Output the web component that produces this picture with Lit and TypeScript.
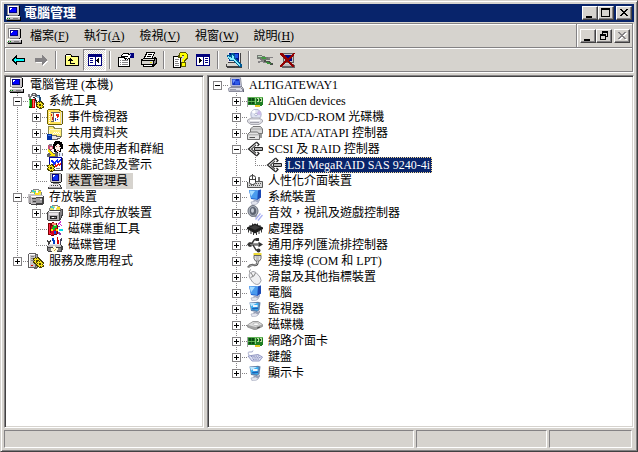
import { LitElement, html, svg, css, nothing, TemplateResult } from "lit";
import { customElement, property } from "lit/decorators.js";
import { classMap } from "lit/directives/class-map.js";

type Node = {
  label: string;
  icon: string;
  open?: boolean;
  expandable?: boolean;
  selected?: "active" | "inactive";
  children?: Node[];
};

const gear = (x: number, y: number) => svg`
  <path d="M${x + 2} ${y}h1v1h1v-1h2v1h1v1h1v2h-1v1h1v2h-2v1h-3v-1h-2v-1h-1v-2h1v-1h-1v-2h2z" fill="#4a4200"/>
  <path d="M${x + 2} ${y + 1}h1v1h1v-1h1v1h1v1h1v1h-1v1h1v1h-1v1h-1v-1h-1v1h-1v-1h-1v-1h-1v-1h1v-1h-1v-1h1z" fill="#f7e31c"/>
  <path d="M${x + 3} ${y + 3}h2v2h-2z" fill="#4a4200"/>`;

const nicCard = svg`
  <path d="M0 4h1v10h-1z" fill="#a5a2a5"/>
  <path d="M1 4h15v8h-15z" fill="#1f7f24"/>
  <path d="M1 4h15v1h-15zM1 8h8v1h-8z" fill="#63b357"/>
  <path d="M2 5h2v3h-2zM5 5h2v3h-2zM2 9h2v2h-2zM5 9h2v2h-2z" fill="#0d4a14"/>
  <path d="M8 5h1v6h-1z" fill="#8fd07a"/>
  <path d="M10 5h2v4h-2zM13 5h2v4h-2z" fill="#b9dfa0"/>
  <path d="M10 6h1v2h-1zM13 6h1v2h-1z" fill="#0d4a14"/>
  <path d="M8 12h5v2h-5z" fill="#e3cb2a"/>
  <path d="M13 12h2v1h-2z" fill="#1f7f24"/>`;

const lcd = svg`
  <path d="M2 1L11 1.500L13.500 .5V8.500L10.500 11L4 10z" fill="#2161cf"/>
  <path d="M2 1L11 1.500L10.500 10L4 9z" fill="#4a9bee"/>
  <path d="M2.500 1.500L8 2L4 7.500z" fill="#a5dbff"/>
  <path d="M11 1.500L14 .5V8.500L10.500 11z" fill="#1b49b4"/>
  <path d="M6.500 10.500L10.500 11L13 9.500V11.500L10.500 14.500L6.500 14z" fill="#a9b0c6"/>
  <path d="M4 13L8.500 12L11.500 13.500L8.500 15.800H5z" fill="#e3e5ee" stroke="#8d93aa" stroke-width=".5"/>`;

const lcdImage = svg`
  <path d="M2.500 1.500L11 .8L13.500 1.500L12.500 9L10 11L4 10z" fill="#5f7fa8"/>
  <path d="M3 2L11.500 2L11 9.500L4.500 9z" fill="#39aef0"/>
  <path d="M3 2L10 2L4 5.500z" fill="#bfe8ff"/>
  <path d="M6 4H10.500V6H6z" fill="#f0f4fb"/>
  <path d="M5 7L11 6.500V8L5.500 8.500z" fill="#1e5fb5"/>
  <path d="M6.500 10.500L10.500 11L13 9.500V11.500L10.500 14.500L6.500 14z" fill="#9aa2b8"/>
  <path d="M4 13L8.500 12L11.500 13.500L8.500 15.800H5z" fill="#e3e5ee" stroke="#8d93aa" stroke-width=".5"/>`;

const scsi = svg`
  <path d="M9.500 1.200L1.500 8L9.500 14.800" fill="none" stroke="#222" stroke-width="1.200"/>
  <path d="M9 3.800L4.500 8L9 12.200" fill="none" stroke="#444" stroke-width="1.200"/>
  <path d="M9.500 1L12 3.500L10.500 5M9.500 15L12 12.500L10.500 11" fill="none" stroke="#222" stroke-width="1.200"/>
  <path d="M3 8L9.500 2.500" stroke="#c8c8c8"/>
  <path d="M7.500 6.500H15.500V9.500H7.500z" fill="#b7b7b7" stroke="#222"/>`;

const pc = svg`
  <path d="M13 1h1v9h-1zM3 10h10v1h-10z" fill="#000"/>
  <path d="M1 0h12v10h-12z" fill="#c6c3c6"/>
  <path d="M1 0h12v1h-11v9h-1z" fill="#848284"/>
  <path d="M2 1h10v1h-9v7h-1z" fill="#fff"/>
  <path d="M3 2h8v6h-8z" fill="#000084"/>
  <path d="M4 3h6v4h-6z" fill="#0000ff"/>
  <path d="M4 3h2v1h-1v1h-1z" fill="#fff"/>
  <path d="M3 10h9v1h-9z" fill="#848284"/>
  <path d="M0 11h14v4h-14z" fill="#c6c3c6"/>
  <path d="M0 11h14v1h-13v3h-1z" fill="#fff"/>
  <path d="M1 15h14v1h-14zM14 12h1v3h-1z" fill="#000"/>
  <path d="M1 13h1v1h-1zM3 13h1v1h-1z" fill="#008200"/>
  <path d="M7 13h5v1h-5zM0 14h14v1h-14z" fill="#848284"/>`;

const disc = svg`
  <path d="M3 1h2v-1h6v1h2v2h1v4h-12v-4h1z" fill="#848284"/>
  <path d="M4 1h7v1h2v5h-10v-4h1z" fill="#dee36b"/>
  <path d="M4 1h2v1h1v2h-1v-1h-2z" fill="#42cfd6"/>
  <path d="M8 1h2v2h-2z" fill="#fff"/>
  <path d="M10 2h3v2h-3z" fill="#ffdf21"/>
  <path d="M7 3h2v2h-2z" fill="#fff"/>`;

const pixelIcons: Record<string, TemplateResult> = {
  pc,
  device: svg`
    <path d="M14 1h1v8h-1zM4 9h10v1h-10z" fill="#212021"/>
    <path d="M3 0h11v9h-11z" fill="#c6c3c6"/>
    <path d="M3 0h11v1h-10v8h-1z" fill="#848284"/>
    <path d="M5 1h7v7h-7z" fill="#000084"/>
    <path d="M6 2h5v5h-5z" fill="#1030f0"/>
    <path d="M6 2h2v1h-1v1h-1z" fill="#fff"/>
    <path d="M6 10h6v1h-6z" fill="#848284"/>
    <path d="M3 11h10v1h1v2h1v2h-14v-2h1v-2h1z" fill="#424142"/>
    <path d="M3 11h9v1h1v2h-11v-2h1z" fill="#e7e3e7"/>
    <path d="M4 12h1v1h-1zM6 12h1v1h-1zM8 12h1v1h-1zM10 12h1v1h-1z" fill="#424142"/>
    <path d="M2 14h12v1h-12z" fill="#a5a2a5"/>`,
  tools: svg`
    <path d="M1 1h1v2h1v-2h1v3h-1v2h-2v-2h-1v-3z" fill="#848284"/>
    <path d="M4 0h4v1h1v3h-2v-1h-3z" fill="#636163"/>
    <path d="M5 1h2v1h-2z" fill="#e7e3e7"/>
    <path d="M5 4h2v1h1v2h1v3h1v4h-2v-4h-1v-3h-1v-2h-1z" fill="#212021"/>
    <path d="M6 5h1v3h1v2h-1z" fill="#a5a2a5"/>
    <path d="M1 6h3v8h-3z" fill="#008200"/>
    <path d="M1 7h1v6h-1z" fill="#7bdf7b"/>
    <path d="M4 6h3v9h-3z" fill="#ce0000"/>
    <path d="M5 7h1v7h-1z" fill="#ff7b7b"/>
    <path d="M1 14h3v1h-3z" fill="#004100"/>
    <path d="M9 2h3v2h1v4h-1v1h-1v-4h-2z" fill="#214973"/>
    <path d="M9 3h2v2h-2z" fill="#9cc7e7"/>${gear(8, 8)}`,
  event: svg`
    <path d="M1 0h11l2 2h2v13h-1v1h-14v-1h-1v-14h1z" fill="#6b5d00"/>
    <path d="M1 1h11v1h2v13h-13z" fill="#ffe35a"/>
    <path d="M2 3h1v1h-1zM2 5h1v1h-1zM2 7h1v1h-1zM2 9h1v1h-1zM2 11h1v1h-1zM2 13h1v1h-1z" fill="#fff"/>
    <path d="M4 3h9v10h-9z" fill="#636163"/>
    <path d="M4 4h2v8h-2z" fill="#ffdf9c"/>
    <path d="M7 4h6v9h-6z" fill="#fff"/>
    <path d="M4 5h1v2h-1zM5 8h1v3h-1z" fill="#d62010"/>
    <path d="M9 5h3v3h-1v1h-1v-2h-1z" fill="#e72010"/>
    <path d="M8 9h1v3h-1zM10 10h1v1h-1z" fill="#2141c6"/>
    <path d="M14 3h1v12h-1z" fill="#dedbde"/>`,
  share: svg`
    <path d="M1 1h6v1h1v1h7v9h-14z" fill="#8c8a52"/>
    <path d="M2 2h4v1h1v1h7v7h-12z" fill="#ffef7b"/>
    <path d="M2 5h1v-1h11v1h-11v6h-1z" fill="#fffbce"/>
    <path d="M7 7h1v1h-1zM9 7h1v1h-1zM11 7h1v1h-1zM6 8h1v1h-1zM8 8h1v1h-1zM10 8h1v1h-1zM12 8h1v1h-1z" fill="#fff"/>
    <path d="M0 9h5v6h-5z" fill="#0030a5"/>
    <path d="M1 10h3v1h-3z" fill="#4a82e7"/>
    <path d="M5 10h5v1h4v2h-1v1h-2v1h-6z" fill="#636163"/>
    <path d="M5 11h4v1h4v1h-3v1h-5z" fill="#e7e3e7"/>`,
  users: svg`
    <path d="M8 0h5v1h2v2h1v5h-2v3h-1v1h-4v-1h-2v-3h-1v-5h1v-2h1z" fill="#000"/>
    <path d="M9 4h1v-1h2v1h1v2h1v1h-1v3h-1v1h-2v-1h-1v-2h-1v-3h1z" fill="#fff3e7"/>
    <path d="M9 5h1v1h-1zM12 5h1v1h-1zM10 9h2v1h-2z" fill="#a55142"/>
    <path d="M1 4h3v1h2v3h-1v1h-3v-1h-1z" fill="#c64a73"/>
    <path d="M2 3h3v2h-3z" fill="#848284"/>
    <path d="M3 6h2v2h-2z" fill="#ffdbc6"/>
    <path d="M1 8h2v1h1v1h1v1h1v1h2v-1h2v1h1v4h-11v-3h1v-1h2v-1h-2z" fill="#636163"/>
    <path d="M1 8h1v1h1v1h1v1h1v1h1v1h2v2h-5v-1h1v-1h-1v-1h-1v-1h-1z" fill="#ffe700"/>
    <path d="M11 11h3v1h2v3h-2v1h-3z" fill="#e7efff"/>
    <path d="M12 12h1v3h-1zM15 12h1v3h-1z" fill="#848284"/>`,
  perf: svg`
    <path d="M2 0h13v14h-13z" fill="#00009c"/>
    <path d="M3 1h11v12h-11z" fill="#fff"/>
    <path d="M4 3h2v1h1v1h1v-1h1v-1h1v-1h1v2h1v-1h1v-1h1v2h-1v1h-1v1h-2v-1h-1v2h-1v1h-2v-2h-1v-1h-1z" fill="#1030ff"/>
    <path d="M8 7h1v1h1v-1h1v-1h1v1h1v-1h1v2h-1v1h-1v-1h-1v1h-1v1h-2z" fill="#e72010"/>
    <path d="M9 11h4v1h-4z" fill="#848284"/>
    <path d="M15 1h1v13h-12v-1h11z" fill="#424142"/>${gear(0, 7)}`,
  storage: svg`${disc}
    <path d="M0 4h8v2h7v1h1v8h-1v1h-12v-1h-2v-1h-1z" fill="#424142"/>
    <path d="M0 4h7v2h8v1h-7v8h-5v-1h-3z" fill="#c6c3c6"/>
    <path d="M0 4h7v1h-7zM3 7h12v1h-12z" fill="#fff"/>
    <path d="M1 7h2v7h-2z" fill="#a5a2a5"/>
    <path d="M4 9h10v5h-10z" fill="#9c9a9c"/>
    <path d="M4 9h4v1h-4zM5 12h3v1h-3z" fill="#424142"/>
    <path d="M12 10h2v1h-2z" fill="#e7e3e7"/>
    <path d="M6 2h5v3h-5z" fill="#42cfa5"/>
    <path d="M7 3h4v3h-4z" fill="#ffdf21"/>
    <path d="M8 2h2v2h-2z" fill="#fff"/>`,
  removable: svg`${disc}
    <path d="M1 6h2v-1h11v-1h2v7h-1v2h-1v2h-1v1h-12v-1h-1v-8h1z" fill="#424142"/>
    <path d="M2 6h11v1h-11z" fill="#fff"/>
    <path d="M1 7h11v8h-11z" fill="#b5b2b5"/>
    <path d="M13 6h1v-1h1v5h-1v3h-1z" fill="#848284"/>
    <path d="M2 8h9v2h-9z" fill="#e7e3e7"/>
    <path d="M3 11h7v3h-7z" fill="#212021"/>
    <path d="M4 12h5v1h-5z" fill="#848284"/>
    <path d="M5 12h2v1h-2z" fill="#fff"/>`,
  defrag: svg`
    <path d="M1 2h4v-1h2v1h3v2h1v9h-1v1h-3v1h-3v-1h-3z" fill="#7b0000"/>
    <path d="M2 3h1v9h3v2h-2v-1h-2z" fill="#ff2442"/>
    <path d="M4 5h6v8h-3v1h-2v-1h-1z" fill="#d60021"/>
    <path d="M5 2h4v2h-4z" fill="#ff8273"/>
    <path d="M6 4h4v3h-2v2h-3v-3h1z" fill="#10b621"/>
    <path d="M7 4h2v1h-2z" fill="#adf7ad"/>
    <path d="M4 8h2v2h-2zM9 8h2v2h-2z" fill="#ffe300"/>
    <path d="M7 10h2v3h-2z" fill="#1041d6"/>
    <path d="M11 2h1v-1h1v-1h1v2h-1v1h-1v1h-1z" fill="#c630ce"/>
    <path d="M13 3h1v1h1v1h-1v-1h-1z" fill="#c630ce"/>
    <path d="M12 8h4v2h-4z" fill="#00dfe7"/>
    <path d="M11 5h2v1h-2zM11 11h2v2h-2zM12 12h2v2h-2z" fill="#8c3aad"/>`,
  diskmgmt: svg`
    <path d="M0 3h1v1h2v-1h1v2h-1v2h-2v-2h-1z" fill="#424142"/>
    <path d="M5 1h2v2h1v4h-2v-3h-1z" fill="#0041c6"/>
    <path d="M10 0h1v3h1v4h-2z" fill="#d60000"/>
    <path d="M13 2h1v-1h1v3h-1v3h-1z" fill="#42415a"/>
    <path d="M1 7h13v1h1v1h1v4h-1v2h-14v-1h-1v-5h1z" fill="#424142"/>
    <path d="M2 7h11v1h1v2h-13v-2h1z" fill="#c6c3c6"/>
    <path d="M2 7h11v1h-11z" fill="#e7e3e7"/>
    <path d="M1 11h13v3h-13z" fill="#848284"/>
    <path d="M6 9h2v1h1v1h2v2h-1v2h-1v1h-2v-1h-2v-1h-1v-3h2z" fill="#fffbde"/>
    <path d="M6 11h1v1h-1zM8 12h1v1h-1zM7 13h1v1h-1z" fill="#c6a542"/>`,
  services: svg`
    <path d="M1 0h7v1h2v14h-1v1h-3v-1h-6v-14h1z" fill="#636163"/>
    <path d="M1 1h6v13h-6z" fill="#c6c3c6"/>
    <path d="M1 1h6v1h-5v12h-1z" fill="#fff"/>
    <path d="M8 2h1v12h-1z" fill="#a5a2a5"/>
    <path d="M3 3h3v1h-3zM3 5h3v1h-3zM3 7h3v1h-3z" fill="#848284"/>
    <path d="M3 12h2v1h-2z" fill="#e70000"/>${gear(5, 4)}${gear(8, 7)}`,
  back: svg`
    <path d="M1 8l5-5h1v3h8v4h-8v3h-1z" fill="#000"/>
    <path d="M3 8l3-3v2h8v2h-8v2z" fill="#00ffff"/>`,
  forward: svg`
    <path d="M15 9l-5 5v-3h-7v-1h8z" fill="#fff"/>
    <path d="M14 8l-5-5v3h-7v4h7v3z" fill="#848284"/>`,
  up: svg`
    <path d="M1 3h1v-1h5v1h1v1h7v10h-14z" fill="#000"/>
    <path d="M2 3h5v2h7v8h-12z" fill="#ffff84"/>
    <path d="M2 3h4v1h-4z" fill="#fff"/>
    <path d="M6 6h1v1h1v1h1v1h-2v2h4v1h-5v-3h-2v-1h1v-1h1z" fill="#000"/>`,
  treepane: svg`
    <path d="M1 2h14v12h-14z" fill="#00007b"/>
    <path d="M2 5h6v8h-6zM9 5h5v8h-5z" fill="#fff"/>
    <path d="M3 6h3v1h-3zM3 8h3v1h-3zM3 10h3v1h-3z" fill="#00007b"/>
    <path d="M12 6v5h-1v-1h-1v-1h-1v-1h1v-1h1v-1z" fill="#000"/>`,
  props: svg`
    <path d="M0 5h12v10h-12z" fill="#000"/>
    <path d="M1 6h10v8h-10z" fill="#fff"/>
    <path d="M2 8h1v1h-1zM4 8h6v1h-6zM2 10h1v1h-1zM4 10h6v1h-6zM2 12h1v1h-1zM4 12h6v1h-6z" fill="#848284"/>
    <path d="M3 3h1v-1h1v-1h6v1h1v5h-2v1h-1v-1h-1v1h-1v-1h-1v-1h-2v-1h-1z" fill="#000"/>
    <path d="M4 3h1v-1h5v1h2v3h-2v1h-1v-1h-2v-1h3v-1h-6z" fill="#fff"/>
    <path d="M12 1h4v5h-4z" fill="#00007b"/>
    <path d="M12 2h1v2h-1z" fill="#8496e7"/>`,
  print: svg`
    <path d="M5 0h9v2h-1v2h-1v2h-9v-2h1v-2h1z" fill="#000"/>
    <path d="M6 1h7v1h-1v2h-1v2h-7v-1h1v-2h1z" fill="#fff"/>
    <path d="M7 2h4v1h-4zM6 4h4v1h-4z" fill="#000"/>
    <path d="M2 6h11v-1h2v1h1v6h-1v1h-1v1h-1v1h-11v-2h-2v-6h2z" fill="#000"/>
    <path d="M2 7h11v1h-11zM1 9h11v3h-11z" fill="#d6d3ce"/>
    <path d="M9 10h2v1h-2z" fill="#dede00"/>
    <path d="M3 13h8v1h-8z" fill="#fff"/>
    <path d="M14 7h1v4h-1v1h-1v-3h1z" fill="#848284"/>`,
  help: svg`
    <path d="M1 4h8v12h-8z" fill="#000"/>
    <path d="M2 5h6v10h-6z" fill="#fff"/>
    <path d="M3 7h4v1h-4zM3 9h3v1h-3zM3 11h4v1h-4zM3 13h4v1h-4z" fill="#848284"/>
    <path d="M7 1h1v-1h6v1h1v1h1v5h-1v1h-1v1h-1v1h1v5h-5v-5h1v-3h1v-1h1v-2h-2v2h-4v-3h1z" fill="#5a5a00"/>
    <path d="M8 1h6v1h1v4h-1v1h-1v1h-1v2h-2v-3h1v-1h1v-3h-2v2h-2zM10 11h3v3h-3z" fill="#ffff00"/>`,
  actionpane: svg`
    <path d="M1 2h14v12h-14z" fill="#00007b"/>
    <path d="M2 5h6v8h-6zM9 5h5v8h-5z" fill="#fff"/>
    <path d="M10 6h3v1h-3zM10 8h3v1h-3zM10 10h3v1h-3z" fill="#00007b"/>
    <path d="M4 6h1v1h1v1h1v1h-1v1h-1v1h-1z" fill="#000"/>`,
  scan: svg`
    <path d="M2 0h12v1h1v10h-13z" fill="#424142"/>
    <path d="M2 0h12v10h-12z" fill="#e7e3e7"/>
    <path d="M3 1h10v8h-10z" fill="#00108c"/>
    <path d="M8 2h4v4h-4z" fill="#2159e7"/>
    <path d="M0 12h14v1h2v3h-15v-1h-1z" fill="#424142"/>
    <path d="M1 12h13v2h-13z" fill="#d6d3ce"/>
    <path d="M1 3h2v-1h1v1h1v-2h3v1h1v4h1v1h1v1h1v1h1v1h1v1h1v1h1v3h-3v-1h-1v-1h-1v-1h-1v-1h-1v-1h-1v-1h-4v-1h-1v-1h-1z" fill="#005a94"/>
    <path d="M2 4h1v1h2v1h1v-3h1v1h1v3h1v1h1v1h1v1h1v1h1v1h1v2h-1v-1h-1v-1h-1v-1h-1v-1h-1v-1h-1v-1h-4v-1h-1z" fill="#84efff"/>`,
  disable: svg`
    <path d="M0 3h5v1h3v1h3v1h2v2h-4v1h-3v-1h-3v-1h-3z" fill="#737973"/>
    <path d="M1 4h4v1h4v1h-4v-1h-4z" fill="#bdd7bd"/>
    <path d="M4 5h5v2h-4z" fill="#429a42"/>
    <path d="M11 5h5v1h-3v1h-2zM1 9h3v-1h3v1h3v2h-4v-1h-3v1h-2z" fill="#848284"/>
    <path d="M7 8h2v1h4v1h1v1h2v2h-3v-1h-3v-1h-1v-1h-2z" fill="#4a514a"/>
    <path d="M9 10h3v1h2v1h-4z" fill="#3a923a"/>`,
  uninstall: svg`
    <path d="M3 1h11v10h-11z" fill="#636163"/>
    <path d="M4 2h9v8h-9z" fill="#c6c3c6"/>
    <path d="M5 3h7v6h-7z" fill="#000884"/>
    <path d="M2 12h12v1h1v3h-13z" fill="#636163"/>
    <path d="M3 12h10v2h-10z" fill="#bdbabd"/>
    <path d="M0 1h3v1h1v1h1v1h1v1h1v1h2v-1h1v-1h1v-1h1v-1h1v-1h2v1h-1v2h-1v1h-1v1h-1v1h-1v1h-1v1h1v1h1v1h1v1h1v1h1v2h-2v-1h-1v-1h-1v-1h-1v-1h-1v-1h-2v1h-1v1h-1v1h-1v1h-1v1h-2v-2h1v-1h1v-1h1v-1h1v-1h1v-2h-1v-1h-1v-1h-1v-1h-1v-1h-1z" fill="#940000"/>`,
};

const smoothIcons: Record<string, TemplateResult> = {
  computer: svg`
    <path d="M2.500 .8H12.500L13.500 9.500H3z" fill="#d9dae6" stroke="#74778c" stroke-width=".8"/>
    <path d="M3.800 2H11.500L12.200 8.200H4.300z" fill="#1434c4"/>
    <path d="M4.300 2.500H8L5 6.500z" fill="#6f97ff"/>
    <path d="M7 4H11V7.500H7z" fill="#2f5be8"/>
    <path d="M.5 11.500L2 10.500H12.500L14.500 12.500V14.500H1z" fill="#dcdde6" stroke="#74768a" stroke-width=".8"/>
    <path d="M2 12.500H8M2 13.800H12" stroke="#8b8d9c" stroke-width=".8"/>
    <path d="M13.500 9.500Q16 11.500 15.500 15" fill="none" stroke="#55586a"/>`,
  nic: nicCard,
  dvd: svg`
    <circle cx="9" cy="5.500" r="5.200" fill="#dfe3f2" stroke="#9aa0bc" stroke-width=".8"/>
    <path d="M9 5.500L12 1.200A5 5 0 0 1 14 6z" fill="#c9b8ea"/>
    <path d="M9 5.500L4.500 3A5 5 0 0 1 8 .8z" fill="#fff"/>
    <circle cx="9" cy="5.500" r="1.300" fill="#fff" stroke="#9097b8" stroke-width=".6"/>
    <path d="M.5 11L4 9H12L15.500 11V13L12 15.500H4L.5 13z" fill="#dcdce2" stroke="#9a9aa4" stroke-width=".8"/>
    <path d="M3 11.500H13" stroke="#fff"/><path d="M3 13.500H12" stroke="#a0a0aa"/>`,
  ide: svg`
    <path d="M3.500 4L6 1.500H13.500L15.500 4V8.500H3.500z" fill="#d9d9d9" stroke="#666" stroke-width=".9"/>
    <path d="M4 4H15" stroke="#999" stroke-width=".8"/>
    <path d="M.5 9.500L3 7H10.500L12.500 9.500V14.500H.5z" fill="#e4e4e4" stroke="#666" stroke-width=".9"/>
    <path d="M1 9.800H12" stroke="#999" stroke-width=".8"/>
    <path d="M2.500 12.500H8" stroke="#555"/><path d="M14 9V13" stroke="#777" stroke-width="1.500"/>`,
  scsi,
  hid: svg`
    <path d="M7 8.500H15.500V14.500H.5V9" fill="#d6d6d6" stroke="#555"/>
    <path d="M9 10.500H15M2 12.500H14" stroke="#555" stroke-dasharray="1 1"/>
    <path d="M2.500 4.500Q2.500 2.500 5.500 2.500T8.500 4.500V9.500Q8.500 11.500 5.500 11.500T2.500 9.500z" fill="#fff" stroke="#333"/>
    <path d="M5.500 1V6.500M3 6.500H8" stroke="#444"/>
    <path d="M12 4V8" stroke="#444" stroke-width="1.500"/>`,
  system: lcd,
  monitor: lcdImage,
  sound: svg`
    <ellipse cx="6" cy="6" rx="5" ry="5.500" fill="#aab0bb" stroke="#6b707b"/>
    <ellipse cx="6" cy="6" rx="3.200" ry="3.900" fill="#5c6370"/>
    <ellipse cx="5.500" cy="5.500" rx="1.500" ry="2.200" fill="#c8ced8"/>
    <path d="M4 11L9 12.500L10.500 10" fill="#8a909c"/>
    <path d="M8.500 14.500L13.500 8.500M11 15.500L15.500 10" fill="none" stroke="#a9b1f3" stroke-width="1.300"/>`,
  cpu: svg`
    <path d="M0 6.500L8 2.500L16 6.500V8L8 12.500L0 8z" fill="#1c1c1c"/>
    <path d="M2.500 6.500L8 4L13 6.500L8 9z" fill="#3d3d3d"/>
    <path d="M1.500 8V11.500M4 9V13M6.500 11V14M14.500 8V11.500M12 9V13M9.500 11V14M3 4V5.500M5.500 2.500V4M10.500 2.500V4M13 4V5.500" stroke="#333"/>`,
  usb: svg`
    <path d="M2 7.500H12" stroke="#333" stroke-width="2"/>
    <path d="M0 7.500L2 5.200H4.500V9.800H2z" fill="#333"/>
    <path d="M11.500 4.800L16 7.500L11.500 10.200z" fill="#333"/>
    <path d="M4.500 7L7.500 2.500H9.500M6 8L9 13H11" fill="none" stroke="#333" stroke-width="1.400"/>
    <path d="M8.500 1H12V4H8.500z" fill="#333"/><circle cx="11.500" cy="13.500" r="2" fill="#333"/>
    <path d="M3 7.500H12" stroke="#aaa" stroke-width=".6"/>`,
  port: svg`
    <path d="M6.500 0H14.500V2.500H6.500z" fill="#ecd934"/>
    <path d="M7 2.500H14V5.500L12.500 8H8.500L7 5.500z" fill="#e9e9e9" stroke="#555" stroke-width=".9"/>
    <path d="M8.500 4H12.500M9 6H12" stroke="#999"/>
    <path d="M10.500 8V10Q10 12.500 6.500 12T1 14.500" fill="none" stroke="#444" stroke-width="2.200"/>
    <path d="M10.500 8V10Q10 12.500 6.500 12T1 14.500" fill="none" stroke="#ddd" stroke-width=".8"/>`,
  mouse: svg`
    <path d="M3 4Q1 1.500 4 .5" fill="none" stroke="#999"/>
    <path d="M3 4Q6 1 9 3.500L13 8Q15.500 12 12.500 14.500T5.500 13L2.500 8.500Q1.500 5.500 3 4z" fill="#f0f0f2" stroke="#a0a0a6"/>
    <path d="M3.500 8.500Q7.500 8 8.500 4M6 7L4 4" fill="none" stroke="#777" stroke-width=".9"/>`,
  disk: svg`
    <path d="M.5 8L6 4.500H11L15.500 7.500V9.500L9 12.500H7L.5 10z" fill="#a3a3a3" stroke="#8a8a8a" stroke-width=".8"/>
    <path d="M1 8L6 5H11L15 7.500L8.500 10z" fill="#dcdcdc"/>
    <ellipse cx="9" cy="7.200" rx="3" ry="1.300" fill="#fff" stroke="#9c9c9c" stroke-width=".6"/>
    <path d="M10 11.200L13 10" stroke="#444"/>`,
  keyboard: svg`
    <path d="M2 6Q0 2.500 3 3T6 1.500" fill="none" stroke="#a4a9cb"/>
    <path d="M1 7L11 5.500L15.500 8L12.500 12H5z" fill="#dde0f3" stroke="#8a90bd" stroke-width=".9"/>
    <path d="M4 7.500L12 7M5 9L13.500 8.500M6 10.500L12 10" stroke="#8a90bd" stroke-dasharray="1.500 .8"/>`,
};

const captionGlyphs: Record<string, TemplateResult> = {
  minimize: svg`<path d="M2 8h6v2h-6z" fill="#000"/>`,
  maximize: svg`<path d="M1 0h9v9h-9zM2 2v6h7v-6z" fill="#000" fill-rule="evenodd"/>`,
  restore: svg`<path d="M4 0h6v6h-2v3h-6v-6h2zM5 2v1h3v2h1v-3zM3 5v3h4v-3z" fill="#000" fill-rule="evenodd"/>`,
  close: svg`<path d="M2 1h2v1h1v1h2v-1h1v-1h2v1h-1v1h-1v1h-1v1h1v1h1v1h1v1h-2v-1h-1v-1h-2v1h-1v1h-2v-1h1v-1h1v-1h1v-1h-1v-1h-1v-1h-1z" fill="currentColor"/>`,
};

function icon(name: string) {
  const crisp = name in pixelIcons || name === "nic";
  return html`<svg class="icon" viewBox="0 0 16 16" aria-hidden="true"
    shape-rendering=${crisp ? "crispEdges" : "auto"}>${pixelIcons[name] ?? smoothIcons[name]}</svg>`;
}

const palette = css`
  :host {
    --face: #d6d3ce;
    --shadow: #848284;
    --dark: #424142;
    --light: #fff;
    --navy: #08246b;
    --ui: "Liberation Serif", "Noto Sans CJK TC", serif;
  }
  * { box-sizing: border-box; }
  .icon { width: 16px; height: 16px; flex: none; display: block; }
  button { font: inherit; color: inherit; padding: 0; margin: 0; }
`;

@customElement("tree-view")
class TreeView extends LitElement {
  @property({ attribute: false }) root!: Node;
  @property({ type: Boolean }) rootExpander = false;
  @property() name = "";

  static styles = [palette, css`
    :host {
      display: block;
      min-width: 0;
      background: #fff;
      border: 1px solid;
      border-color: var(--shadow) var(--light) var(--light) var(--shadow);
      box-shadow: inset 1px 1px var(--dark), inset -1px -1px var(--face);
      padding: 1px;
      overflow: hidden;
    }
    ul { list-style: none; margin: 0; padding: 0; }
    .inset { padding-left: 3px; }
    .row { display: flex; align-items: center; height: 16px; white-space: nowrap; }
    .cell {
      --dots-v: repeating-linear-gradient(to bottom, var(--shadow) 0 1px, transparent 1px 2px);
      --dots-h: repeating-linear-gradient(to right, var(--shadow) 0 1px, transparent 1px 2px);
      flex: none;
      width: 19px;
      height: 16px;
      padding: 4px;
      background-repeat: no-repeat;
    }
    .through { background-image: var(--dots-v); background-position: 8px 0; background-size: 1px 16px; }
    .stub { background-image: var(--dots-h); background-position: 8px 8px; background-size: 11px 1px; }
    .tee, .corner { background-image: var(--dots-v), var(--dots-h); background-position: 8px 0, 8px 8px; }
    .tee { background-size: 1px 16px, 11px 1px; }
    .corner { background-size: 1px 8px, 11px 1px; }
    .toggle {
      display: block;
      width: 9px;
      height: 9px;
      border: 1px solid var(--shadow);
      background:
        linear-gradient(#000, #000) 1px 3px / 5px 1px no-repeat,
        linear-gradient(#000, #000) 3px 1px / 1px 5px no-repeat,
        #fff;
    }
    .toggle.open { background: linear-gradient(#000, #000) 1px 3px / 5px 1px no-repeat, #fff; }
    .label {
      height: 16px;
      margin-left: 3px;
      padding: 0 2px;
      font: 12px/16px var(--ui);
      color: #000;
    }
    .inactive { background: var(--face); padding-right: 5px; }
    .active { background: var(--navy); color: #fff; outline: 1px dotted #f7db94; outline-offset: -1px; }
  `];

  private renderNode(node: Node, guides: boolean[], last: boolean, depth: number): TemplateResult {
    const hasCell = depth > 0 || this.rootExpander;
    const canToggle = hasCell && (node.expandable || !!node.children);
    const kind = depth === 0 ? "stub" : last ? "corner" : "tee";
    const childGuides = depth === 0 ? (hasCell ? [false] : []) : [...guides, !last];
    return html`<li role="treeitem" aria-expanded=${node.open ? "true" : "false"}>
      <div class="row">
        ${guides.map((on) => html`<span class=${classMap({ cell: true, through: on })}></span>`)}
        ${hasCell ? html`<span class="cell ${kind}">${canToggle
          ? html`<button class=${classMap({ toggle: true, open: !!node.open })} aria-label=${node.label}
              @click=${() => { node.open = !node.open; this.requestUpdate(); }}></button>`
          : nothing}</span>` : nothing}
        ${icon(node.icon)}<span class="label ${node.selected ?? ""}">${node.label}</span>
      </div>
      ${node.open && node.children ? html`<ul role="group">${node.children.map((child, i) =>
        this.renderNode(child, childGuides, i === node.children!.length - 1, depth + 1))}</ul>` : nothing}
    </li>`;
  }

  render() {
    return html`<ul role="tree" aria-label=${this.name} class=${classMap({ inset: !this.rootExpander })}>
      ${this.renderNode(this.root, [], true, 0)}
    </ul>`;
  }
}

const scopeTree: Node = {
  label: "電腦管理 (本機)", icon: "pc", open: true, children: [
    { label: "系統工具", icon: "tools", open: true, children: [
      { label: "事件檢視器", icon: "event", expandable: true },
      { label: "共用資料夾", icon: "share", expandable: true },
      { label: "本機使用者和群組", icon: "users", expandable: true },
      { label: "效能記錄及警示", icon: "perf", expandable: true },
      { label: "裝置管理員", icon: "device", selected: "inactive" },
    ] },
    { label: "存放裝置", icon: "storage", open: true, children: [
      { label: "卸除式存放裝置", icon: "removable", expandable: true },
      { label: "磁碟重組工具", icon: "defrag" },
      { label: "磁碟管理", icon: "diskmgmt" },
    ] },
    { label: "服務及應用程式", icon: "services", expandable: true },
  ],
};

const deviceTree: Node = {
  label: "ALTIGATEWAY1", icon: "computer", open: true, children: [
    { label: "AltiGen devices", icon: "nic", expandable: true },
    { label: "DVD/CD-ROM 光碟機", icon: "dvd", expandable: true },
    { label: "IDE ATA/ATAPI 控制器", icon: "ide", expandable: true },
    { label: "SCSI 及 RAID 控制器", icon: "scsi", open: true, children: [
      { label: "LSI MegaRAID SAS 9240-4i", icon: "scsi", selected: "active" },
    ] },
    { label: "人性化介面裝置", icon: "hid", expandable: true },
    { label: "系統裝置", icon: "system", expandable: true },
    { label: "音效，視訊及遊戲控制器", icon: "sound", expandable: true },
    { label: "處理器", icon: "cpu", expandable: true },
    { label: "通用序列匯流排控制器", icon: "usb", expandable: true },
    { label: "連接埠 (COM 和 LPT)", icon: "port", expandable: true },
    { label: "滑鼠及其他指標裝置", icon: "mouse", expandable: true },
    { label: "電腦", icon: "system", expandable: true },
    { label: "監視器", icon: "monitor", expandable: true },
    { label: "磁碟機", icon: "disk", expandable: true },
    { label: "網路介面卡", icon: "nic", expandable: true },
    { label: "鍵盤", icon: "keyboard", expandable: true },
    { label: "顯示卡", icon: "monitor", expandable: true },
  ],
};

const menus: [string, string][] = [["檔案", "F"], ["執行", "A"], ["檢視", "V"], ["視窗", "W"], ["說明", "H"]];

const tools: ([string, string] | null)[] = [
  ["back", "上一頁"], ["forward", "下一頁"], null,
  ["up", "上一層"], ["treepane", "主控台樹狀目錄"], null,
  ["props", "內容"], ["print", "列印"], null,
  ["help", "說明"], ["actionpane", "執行窗格"], null,
  ["scan", "掃描硬體變更"], null,
  ["disable", "停用"], ["uninstall", "解除安裝"],
];

@customElement("app-root")
class AppRoot extends LitElement {
  static styles = [palette, css`
    :host {
      display: flex;
      flex-direction: column;
      min-height: 100vh;
      box-sizing: border-box;
      padding: 3px;
      border: 1px solid;
      border-color: var(--face) var(--dark) var(--dark) var(--face);
      box-shadow: inset 1px 1px var(--light), inset -1px -1px var(--shadow);
      background: var(--face);
      font: 12px/16px var(--ui);
      color: #000;
    }
    .title {
      display: flex;
      align-items: center;
      height: 18px;
      padding: 0 2px;
      background: var(--navy);
      color: #fff;
    }
    .title h1 { flex: 1; margin: 0 0 0 2px; font: bold 13px/16px var(--ui); }
    .caption { display: flex; }
    .caption button {
      width: 16px;
      height: 14px;
      padding: 1px;
      border: 1px solid;
      border-color: var(--light) var(--dark) var(--dark) var(--light);
      box-shadow: inset -1px -1px var(--shadow);
      background: var(--face);
      color: #000;
    }
    .caption svg { display: block; width: 12px; height: 10px; }
    .caption .close { margin-left: 2px; }
    .caption .close:disabled { color: var(--shadow); }
    .caption .close:disabled svg { filter: drop-shadow(1px 1px 0 #fff); }
    .bars {
      margin: 1px 1px 0 0;
      border: 1px solid var(--shadow);
      box-shadow: inset 1px 1px var(--light), 1px 1px var(--light);
    }
    .menubar { display: flex; align-items: center; height: 24px; border-bottom: 1px solid var(--shadow); padding-left: 2px; }
    .menus { flex: 1; display: flex; gap: 1px; }
    .menus button { height: 18px; padding: 0 7px; border: 0; background: none; }
    .menubar .caption {
      align-self: stretch;
      align-items: center;
      padding: 0 2px;
      border-left: 1px solid var(--shadow);
      box-shadow: inset 1px 0 var(--light);
    }
    .menubar .caption button:first-child { margin-left: 1px; }
    .toolbar { display: flex; align-items: center; height: 23px; border-top: 1px solid var(--light); padding-left: 1px; }
    .tool {
      width: 23px;
      height: 22px;
      display: flex;
      align-items: center;
      justify-content: center;
      border: 0;
      background: none;
    }
    .pressed {
      border: 1px solid;
      border-color: var(--shadow) var(--light) var(--light) var(--shadow);
      background: repeating-conic-gradient(#fff 0 25%, var(--face) 0 50%) 0 0 / 2px 2px;
    }
    .sep { width: 8px; height: 18px; padding: 0 3px; }
    .sep::before { content: ""; display: block; width: 2px; height: 100%; background: linear-gradient(to right, var(--shadow) 50%, var(--light) 50%); }
    .panes {
      flex: 1;
      display: grid;
      grid-template-columns: 200px minmax(0, 1fr);
      gap: 3px;
      margin-top: 3px;
    }
    .status {
      display: grid;
      grid-template-columns: 1fr 131px 83px;
      gap: 2px;
      margin: 2px 2px 0 0;
    }
    .status span {
      height: 18px;
      border: 1px solid;
      border-color: var(--shadow) var(--light) var(--light) var(--shadow);
    }
  `];

  private caption(kinds: string[], closeDisabled = false) {
    return html`<div class="caption">${kinds.map((k) => html`
      <button class=${k} aria-label=${k} ?disabled=${k === "close" && closeDisabled}>
        <svg viewBox="0 0 12 10" shape-rendering="crispEdges">${captionGlyphs[k]}</svg>
      </button>`)}</div>`;
  }

  render() {
    return html`
      <header class="title">
        ${icon("pc")}
        <h1>電腦管理</h1>
        ${this.caption(["minimize", "maximize", "close"])}
      </header>
      <div class="bars">
        <div class="menubar">
          ${icon("pc")}
          <nav class="menus">${menus.map(([text, key]) => html`<button>${text}(<u>${key}</u>)</button>`)}</nav>
          ${this.caption(["minimize", "restore", "close"], true)}
        </div>
        <div class="toolbar" role="toolbar">${tools.map((tool) => tool
          ? html`<button class=${classMap({ tool: true, pressed: tool[0] === "treepane" })}
              aria-label=${tool[1]} ?disabled=${tool[0] === "forward"}>${icon(tool[0])}</button>`
          : html`<span class="sep"></span>`)}</div>
      </div>
      <main class="panes">
        <tree-view .root=${scopeTree} name="主控台"></tree-view>
        <tree-view .root=${deviceTree} .rootExpander=${true} name="裝置"></tree-view>
      </main>
      <footer class="status"><span></span><span></span><span></span></footer>
    `;
  }
}
